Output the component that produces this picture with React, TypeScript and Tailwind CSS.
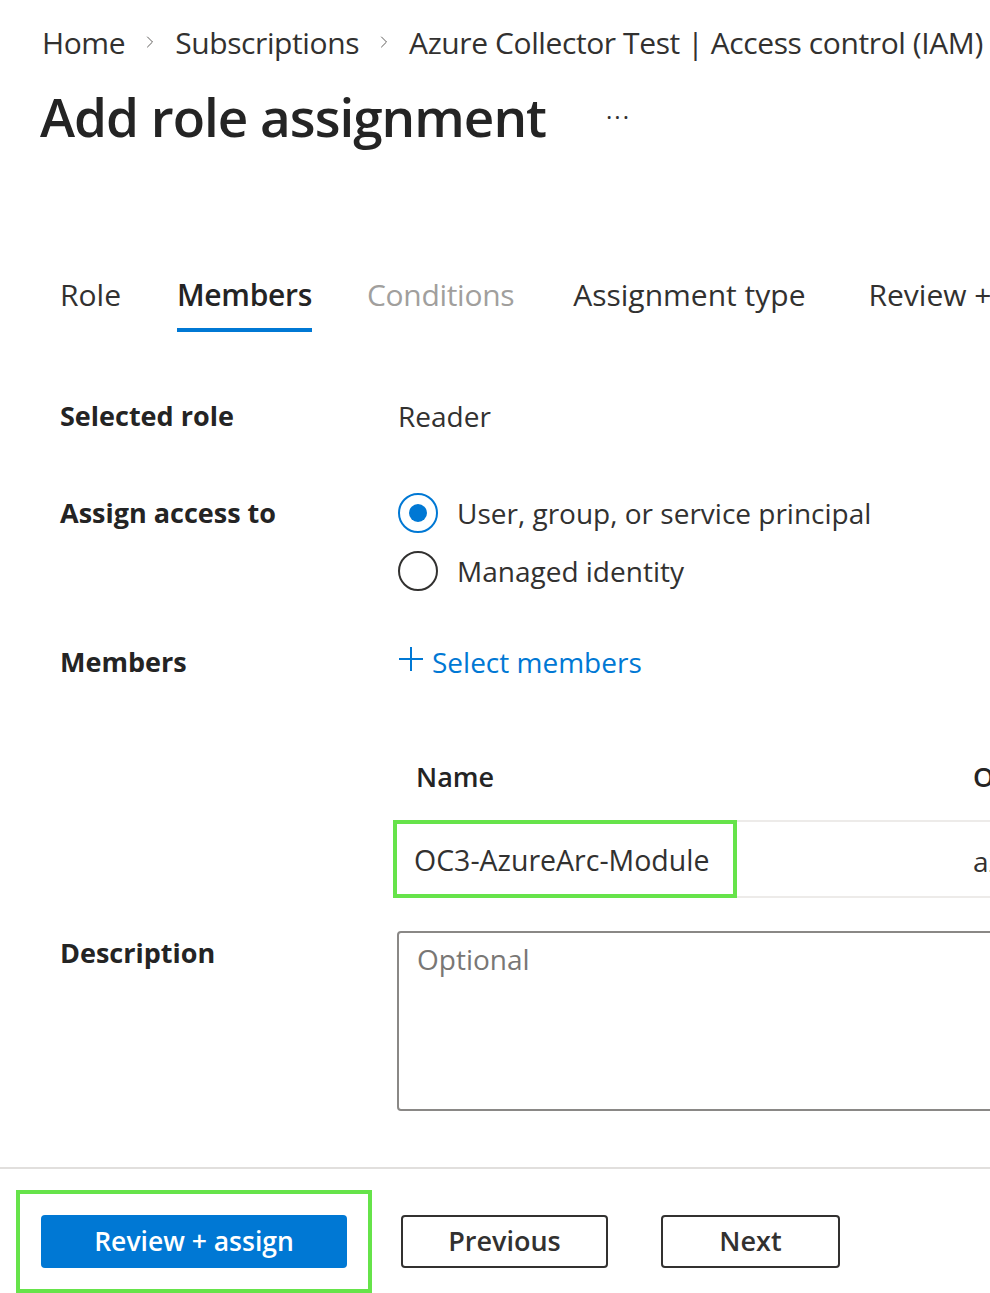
import { ChevronRight } from "lucide-react";

const font = { fontFamily: '"Open Sans", "Noto Sans", Arial, sans-serif' };

function Crumb({ label, last }: { label: string; last?: boolean }) {
  return (
    <div className="flex items-center shrink-0">
      <span className="text-[30px] text-[#323130] tracking-[-0.4px]">{label}</span>
      {!last && <ChevronRight size={20} strokeWidth={1.2} className="mx-[15px] text-[#605e5c]" />}
    </div>
  );
}

function Radio({ checked, label }: { checked?: boolean; label: string }) {
  return (
    <label className="flex items-center gap-[19px] h-[46px]">
      <span
        className={
          "w-[40px] h-[40px] rounded-full border-[2px] flex items-center justify-center shrink-0 " +
          (checked ? "border-[#0078d4]" : "border-[#323130]")
        }
      >
        {checked && <span className="w-[18px] h-[18px] rounded-full bg-[#0078d4]" />}
      </span>
      <span className="text-[28px] text-[#323130]">{label}</span>
    </label>
  );
}

export default function App() {
  const tabs = [
    { label: "Role", state: "idle", cls: "" },
    { label: "Members", state: "active", cls: "ml-[56px]" },
    { label: "Conditions", state: "disabled", cls: "ml-[55px]" },
    { label: "Assignment type", state: "idle", cls: "ml-[59px] tracking-[0px]" },
    { label: "Review + assign", state: "idle", cls: "ml-[63px]" },
  ];

  return (
    <div className="w-[990px] h-[1293px] overflow-hidden bg-white whitespace-nowrap" style={font}>
      {/* breadcrumb */}
      <div className="flex items-center pl-[42px] pt-[20px] h-[64px]">
        <Crumb label="Home" />
        <Crumb label="Subscriptions" />
        <Crumb label="Azure Collector Test | Access control (IAM)" last />
      </div>

      {/* title */}
      <div className="flex items-center pl-[40px] mt-[20px] h-[66px]">
        <h1 className="text-[53px] font-semibold text-[#242424] tracking-[-1px] shrink-0">Add role assignment</h1>
        <span className="ml-[60px] text-[24px] text-[#323130] tracking-[2px]">···</span>
      </div>

      {/* tabs */}
      <div className="flex pl-[60px] mt-[125px]">
        {tabs.map((t) => (
          <div key={t.label} className={"flex flex-col shrink-0 " + t.cls}>
            <span
              className={
                "text-[30px] leading-[40px] " +
                (t.state === "active"
                  ? "font-semibold text-[#242424] tracking-[-0.3px]"
                  : t.state === "disabled"
                  ? "text-[#a19f9d] tracking-[-0.3px]"
                  : "text-[#323130]")
              }
            >
              {t.label}
            </span>
            <span className={"mt-[13px] h-[4px] " + (t.state === "active" ? "bg-[#0078d4]" : "")} />
          </div>
        ))}
      </div>

      {/* form */}
      <div className="pl-[60px] mt-[64px]">
        <div className="flex items-center h-[40px]">
          <span className="w-[338px] shrink-0 text-[27px] font-bold text-[#242424]">Selected role</span>
          <span className="text-[28px] text-[#323130]">Reader</span>
        </div>

        <div className="flex mt-[54px]">
          <span className="w-[338px] shrink-0 text-[27px] font-bold text-[#242424] leading-[46px]">Assign access to</span>
          <div className="flex flex-col gap-[12px]">
            <Radio checked label="User, group, or service principal" />
            <Radio label="Managed identity" />
          </div>
        </div>

        <div className="flex items-center h-[40px] mt-[48px]">
          <span className="w-[338px] shrink-0 text-[27px] font-bold text-[#242424]">Members</span>
          <span className="flex items-center gap-[8px] text-[28px] text-[#0078d4]">
            <svg width="26" height="26" viewBox="0 0 26 26" className="-mt-[6px]">
              <path d="M13 1v24M1 13h24" stroke="#0078d4" strokeWidth="2" fill="none" />
            </svg>
            Select members
          </span>
        </div>

        {/* members table */}
        <div className="ml-[335px] mt-[75px]">
          <div className="flex items-center h-[40px] pl-[21px]">
            <span className="w-[557px] shrink-0 text-[27px] font-semibold text-[#242424]">Name</span>
            <span className="shrink-0 text-[27px] font-semibold text-[#242424]">Object ID</span>
          </div>
          <div className="mt-[23px] border-t-[2px] border-b-[2px] border-[#edebe9] h-[78px] flex items-center">
            <div className="h-[78px] w-[344px] shrink-0 -mt-[1px] border-[4px] border-[#66e34a] flex items-center pl-[17px] -ml-[2px]">
              <span className="text-[28.5px] text-[#323130] mt-[3px]">OC3-AzureArc-Module</span>
            </div>
            <span className="ml-[236px] shrink-0 text-[28px] text-[#323130] mt-[3px]">a2c7b1f0-4e3d</span>
          </div>
        </div>

        <div className="flex mt-[33px]">
          <span className="w-[337px] shrink-0 text-[27px] font-bold text-[#242424] pt-[2px]">Description</span>
          <div className="w-[700px] shrink-0 h-[180px] border-[2px] border-[#8a8886] rounded-[4px] pl-[18px] pt-[5px]">
            <span className="text-[28px] text-[#797775]">Optional</span>
          </div>
        </div>
      </div>

      {/* footer */}
      <div className="mt-[56px] h-[2px] bg-[#e1dfdd]" />
      <div className="flex items-center pl-[16px] mt-[21px]">
        <div className="border-[4px] border-[#66e34a] px-[21px] py-[21px] shrink-0">
          <button className="w-[306px] h-[53px] rounded-[4px] bg-[#0078d4] text-white text-[26.5px] font-semibold">
            Review + assign
          </button>
        </div>
        <button className="ml-[29px] w-[207px] h-[53px] shrink-0 rounded-[4px] border-[2px] border-[#323130] text-[27px] font-semibold text-[#323130]">
          Previous
        </button>
        <button className="ml-[53px] w-[179px] h-[53px] shrink-0 rounded-[4px] border-[2px] border-[#323130] text-[27px] font-semibold text-[#323130]">
          Next
        </button>
      </div>
    </div>
  );
}
